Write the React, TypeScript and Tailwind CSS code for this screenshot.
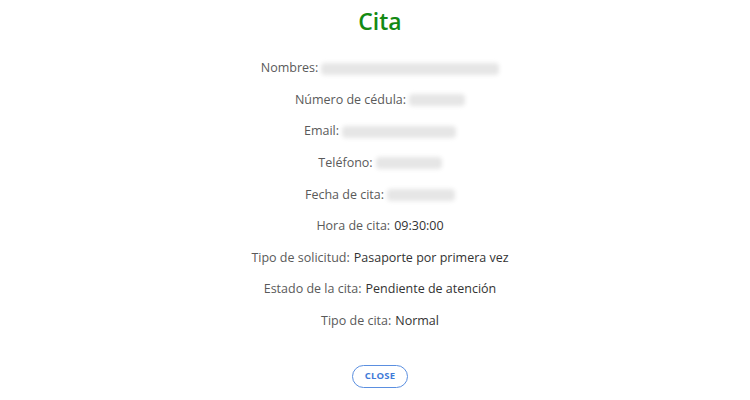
const rows: { label: string; value?: string; blur?: number }[] = [
  { label: "Nombres:", blur: 178 },
  { label: "Número de cédula:", blur: 56 },
  { label: "Email:", blur: 114 },
  { label: "Teléfono:", blur: 66 },
  { label: "Fecha de cita:", blur: 68 },
  { label: "Hora de cita:", value: "09:30:00" },
  { label: "Tipo de solicitud:", value: "Pasaporte por primera vez" },
  { label: "Estado de la cita:", value: "Pendiente de atención" },
  { label: "Tipo de cita:", value: "Normal" },
];

export default function App() {
  return (
    <div className="w-[750px] h-[400px] bg-white pl-[10px] font-['Open_Sans',sans-serif] flex flex-col items-center">
      <h1 className="mt-[6px] text-[23px] font-semibold text-[#138a13] leading-[30px]">Cita</h1>

      <div className="mt-[23px] flex flex-col items-center gap-[12.6px]">
        {rows.map((r) => (
          <p key={r.label} className="flex items-center h-[19px] text-[12.5px] text-[#5a5a5a]">
            <span>{r.label}</span>
            {r.value ? (
              <span className="ml-[4px] font-medium text-[#333]">{r.value}</span>
            ) : (
              <span
                className="ml-[3px] h-[12px] bg-[#e6e6e6] blur-[2px] rounded-sm"
                style={{ width: r.blur }}
              />
            )}
          </p>
        ))}
      </div>

      <button className="mt-[34px] h-[23px] w-[56px] rounded-full border border-[#5b8fe0] text-[9.5px] font-bold text-[#3f7bd8] tracking-wide">
        CLOSE
      </button>
    </div>
  );
}
